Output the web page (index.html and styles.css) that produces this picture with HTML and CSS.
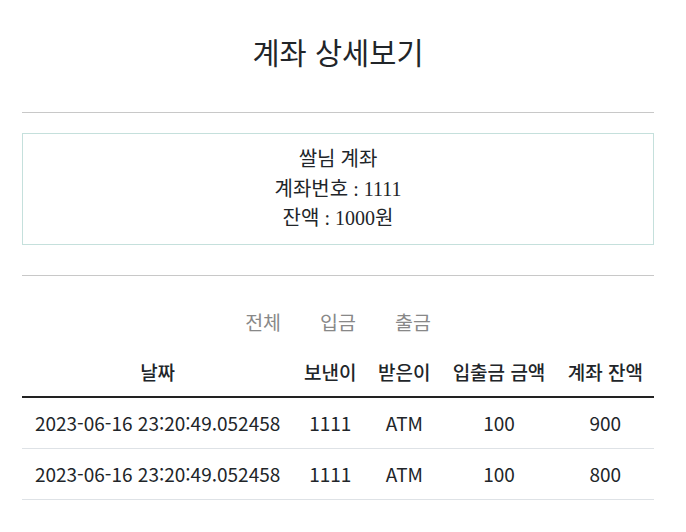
FILE: index.html
```html
<!DOCTYPE html>
<html lang="ko">
<head>
<meta charset="utf-8">
<title>계좌 상세보기</title>
<link rel="stylesheet" href="styles.css">
</head>
<body>
<div class="page">
  <h1 class="title">계좌 상세보기</h1>
  <hr class="rule">
  <div class="info">
    <div>쌀님 계좌</div>
    <div>계좌번호 : 1111</div>
    <div>잔액 : 1000원</div>
  </div>
  <hr class="rule">
  <div class="tabs">
    <span class="tab">전체</span>
    <span class="tab">입금</span>
    <span class="tab">출금</span>
  </div>
  <table class="history">
    <thead>
      <tr><th>날짜</th><th>보낸이</th><th>받은이</th><th>입출금 금액</th><th>계좌 잔액</th></tr>
    </thead>
    <tbody>
      <tr><td>2023-06-16 23:20:49.052458</td><td>1111</td><td>ATM</td><td>100</td><td>900</td></tr>
      <tr><td>2023-06-16 23:20:49.052458</td><td>1111</td><td>ATM</td><td>100</td><td>800</td></tr>
    </tbody>
  </table>
</div>
</body>
</html>
```

FILE: styles.css
```css
html, body {
  margin: 0;
  padding: 0;
  background: #fff;
}
body {
  font-family: "Noto Sans CJK KR", "Noto Sans", sans-serif;
  color: #212529;
}
.page {
  width: 632px;
  margin: 0 0 0 22px;
  padding-top: 27px;
}
.title {
  margin: 0;
  text-align: center;
  font-size: 29.5px;
  font-weight: 400;
  line-height: 48px;
}
.rule {
  border: 0;
  border-top: 1px solid #c8c8c8;
  margin: 37px 0 20px;
}
.info {
  border: 1px solid #c5e0dc;
  padding: 11px 0 10px;
  text-align: center;
  font-family: "Liberation Serif", "Noto Sans CJK KR", serif;
  font-size: 20px;
  line-height: 29.5px;
}
.info + .rule {
  margin: 30px 0 21px;
}
.tabs {
  display: flex;
  justify-content: center;
  gap: 39px;
  font-size: 19.5px;
  color: #888;
  line-height: 50px;
}
.tab {
  cursor: pointer;
}
.history {
  width: 100%;
  border-collapse: collapse;
  font-size: 19px;
  line-height: 26px;
  text-align: center;
}
.history th {
  font-weight: 500;
  padding: 12px 10px 11px;
  border-bottom: 2px solid #222;
}
.history td {
  padding: 12px 10px;
  border-bottom: 1px solid #dee2e6;
  white-space: nowrap;
}
```
